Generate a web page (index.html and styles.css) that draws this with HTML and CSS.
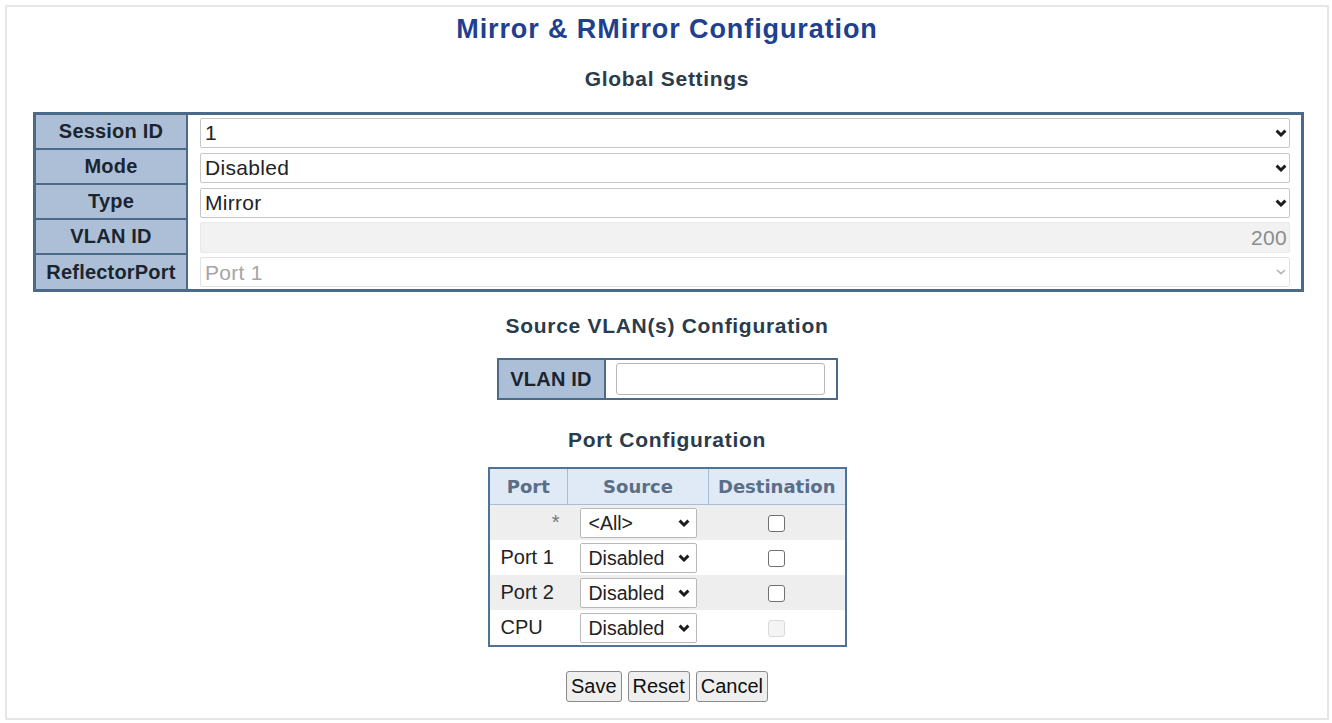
FILE: index.html
```html
<!DOCTYPE html>
<html lang="en">

<head>
    <meta charset="UTF-8">
    <meta name="viewport" content="width=device-width, initial-scale=1.0">
    <title>Mirror &amp; RMirror Configuration</title>
    <link rel="stylesheet" href="styles.css">
</head>

<body>
    <div class="frame">
        <h1 class="title">Mirror &amp; RMirror Configuration</h1>

        <h2 class="heading">Global Settings</h2>
        <div class="global">
            <div class="label">Session ID</div>
            <div class="value">
                <span class="sel">
                    <select class="field"><option>1</option></select>
                    <svg class="chev" viewBox="0 0 12 8"><polyline points="1.6,1.6 6,6 10.4,1.6"/></svg>
                </span>
            </div>
            <div class="label">Mode</div>
            <div class="value">
                <span class="sel">
                    <select class="field"><option>Disabled</option></select>
                    <svg class="chev" viewBox="0 0 12 8"><polyline points="1.6,1.6 6,6 10.4,1.6"/></svg>
                </span>
            </div>
            <div class="label">Type</div>
            <div class="value">
                <span class="sel">
                    <select class="field"><option>Mirror</option></select>
                    <svg class="chev" viewBox="0 0 12 8"><polyline points="1.6,1.6 6,6 10.4,1.6"/></svg>
                </span>
            </div>
            <div class="label">VLAN ID</div>
            <div class="value">
                <input class="field num" type="text" value="200" disabled>
            </div>
            <div class="label">ReflectorPort</div>
            <div class="value">
                <span class="sel">
                    <select class="field off" disabled><option>Port 1</option></select>
                    <svg class="chev light" viewBox="0 0 12 8"><polyline points="2,2 6,5.6 10,2"/></svg>
                </span>
            </div>
        </div>

        <h2 class="heading">Source VLAN(s) Configuration</h2>
        <div class="vlanbox">
            <div class="label">VLAN ID</div>
            <div class="vlanval"><input class="vlaninput" type="text"></div>
        </div>

        <h2 class="heading">Port Configuration</h2>
        <table class="ports">
            <colgroup>
                <col class="c1">
                <col class="c2">
                <col class="c3">
            </colgroup>
            <thead>
                <tr>
                    <th>Port</th>
                    <th>Source</th>
                    <th>Destination</th>
                </tr>
            </thead>
            <tbody>
                <tr class="odd">
                    <td class="star">*</td>
                    <td class="src">
                        <span class="psel">
                            <select class="pfield"><option>&lt;All&gt;</option></select>
                            <svg class="pchev" viewBox="0 0 12 8"><polyline points="1.6,1.6 6,6 10.4,1.6"/></svg>
                        </span>
                    </td>
                    <td class="dst"><input class="chk" type="checkbox"></td>
                </tr>
                <tr>
                    <td class="name">Port 1</td>
                    <td class="src">
                        <span class="psel">
                            <select class="pfield"><option>Disabled</option></select>
                            <svg class="pchev" viewBox="0 0 12 8"><polyline points="1.6,1.6 6,6 10.4,1.6"/></svg>
                        </span>
                    </td>
                    <td class="dst"><input class="chk" type="checkbox"></td>
                </tr>
                <tr class="odd">
                    <td class="name">Port 2</td>
                    <td class="src">
                        <span class="psel">
                            <select class="pfield"><option>Disabled</option></select>
                            <svg class="pchev" viewBox="0 0 12 8"><polyline points="1.6,1.6 6,6 10.4,1.6"/></svg>
                        </span>
                    </td>
                    <td class="dst"><input class="chk" type="checkbox"></td>
                </tr>
                <tr>
                    <td class="name">CPU</td>
                    <td class="src">
                        <span class="psel">
                            <select class="pfield"><option>Disabled</option></select>
                            <svg class="pchev" viewBox="0 0 12 8"><polyline points="1.6,1.6 6,6 10.4,1.6"/></svg>
                        </span>
                    </td>
                    <td class="dst"><input class="chk" type="checkbox" disabled></td>
                </tr>
            </tbody>
        </table>

        <div class="buttons">
            <button class="btn" type="button">Save</button>
            <button class="btn" type="button">Reset</button>
            <button class="btn" type="button">Cancel</button>
        </div>
    </div>
</body>

</html>
```

FILE: styles.css
```css
body {
    margin: 0;
    overflow: hidden;
    background: #fff;
    font-family: "Liberation Sans", Arial, sans-serif;
}

.frame {
    margin: 5px 3px 3px 5px;
    height: 715px;
    box-sizing: border-box;
    border: 2px solid #e6e6e6;
    padding-top: 6px;
}

.title {
    margin: 0;
    text-align: center;
    font-size: 27px;
    line-height: 32px;
    letter-spacing: 0.9px;
    color: #213f8e;
}

.heading {
    margin: 21px 0 0;
    text-align: center;
    font-size: 21px;
    line-height: 26px;
    letter-spacing: 0.7px;
    color: #2a3b4c;
}

/* global settings */
.global {
    display: grid;
    grid-template-columns: 152px 1fr;
    margin: 20px 23px 0 26px;
    border: 3px solid #4b6a8a;
}

.label {
    display: flex;
    align-items: center;
    justify-content: center;
    box-sizing: border-box;
    background: #adbfd6;
    font-weight: bold;
    font-size: 20px;
    letter-spacing: 0.2px;
    color: #1a2530;
}

.global .label {
    height: 35px;
    border-right: 2px solid #4b6a8a;
    border-bottom: 2px solid #4b6a8a;
}

.global .label:nth-last-child(2) {
    height: 34px;
    border-bottom: none;
}

.global .value {
    display: flex;
    align-items: center;
    padding: 0 11px 0 12px;
}

.sel {
    position: relative;
    display: flex;
    flex: 1;
}

.field {
    width: 100%;
    height: 30px;
    box-sizing: border-box;
    margin: 0;
    padding: 0 0 0 4px;
    -webkit-appearance: none;
    appearance: none;
    border: 1px solid #c6c6c6;
    border-radius: 2px;
    background: #fff;
    font-family: "Liberation Sans", Arial, sans-serif;
    font-size: 21px;
    letter-spacing: 0.3px;
    color: #222;
    opacity: 1;
}

.field.num {
    height: 31px;
    padding: 0 2px 0 0;
    text-align: right;
    background: #f2f2f2;
    border-color: #e9e9e9;
    color: #8c8c8c;
}

.field.off {
    border-color: #e2e2e2;
    color: #a5a5a5;
}

.chev {
    position: absolute;
    right: 3px;
    top: 50%;
    width: 12px;
    height: 8px;
    margin-top: -4px;
    fill: none;
    stroke: #1c1c1c;
    stroke-width: 2.9;
    pointer-events: none;
}

.chev.light {
    stroke: #b3b3b3;
    stroke-width: 1.6;
}

/* source vlan */
.vlanbox {
    display: flex;
    width: 341px;
    height: 42px;
    box-sizing: border-box;
    margin: 19px auto 0;
    border: 2px solid #4b6a8a;
}

.vlanbox .label {
    width: 107px;
    border-right: 2px solid #4b6a8a;
}

.vlanval {
    display: flex;
    align-items: center;
    padding-left: 10px;
}

.vlaninput {
    width: 209px;
    height: 32px;
    box-sizing: border-box;
    margin: 0;
    border: 1px solid #b8b8b8;
    border-radius: 3px;
    font-size: 20px;
}

.vlanbox + .heading {
    margin-top: 27px;
}

/* port table */
.ports {
    margin: 14px auto 0;
    width: 357px;
    table-layout: fixed;
    border-collapse: collapse;
    border: 2px solid #4f7397;
}

.ports .c1 {
    width: 79px;
}

.ports .c2 {
    width: 141px;
}

.ports .c3 {
    width: 137px;
}

.ports th {
    height: 35px;
    padding: 0;
    background: #dfeaf6;
    border-left: 1px solid #a9bdd2;
    border-right: 1px solid #a9bdd2;
    border-bottom: 1px solid #a9bdd2;
    font-family: "DejaVu Sans", Verdana, sans-serif;
    font-size: 18px;
    color: #5a6e88;
}

.ports td {
    height: 35px;
    padding: 0;
    font-size: 20px;
    color: #222;
}

.ports .odd td {
    background: #eeeeee;
}

.ports .name {
    padding-left: 11px;
}

.ports .star {
    text-align: right;
    padding-right: 8px;
    color: #777;
}

.ports .src,
.ports .dst {
    text-align: center;
}

.psel {
    position: relative;
    display: inline-block;
    vertical-align: middle;
}

.pfield {
    display: block;
    width: 117px;
    height: 30px;
    box-sizing: border-box;
    margin: 0;
    padding: 0 0 0 8px;
    -webkit-appearance: none;
    appearance: none;
    border: 1px solid #b9b9b9;
    border-radius: 2px;
    background: #fff;
    font-family: "Liberation Sans", Arial, sans-serif;
    font-size: 19.5px;
    color: #222;
}

.pchev {
    position: absolute;
    right: 7px;
    top: 50%;
    width: 12px;
    height: 8px;
    margin-top: -4px;
    fill: none;
    stroke: #1c1c1c;
    stroke-width: 2.9;
    pointer-events: none;
}

.chk {
    -webkit-appearance: none;
    appearance: none;
    width: 17px;
    height: 17px;
    margin: 0;
    vertical-align: middle;
    box-sizing: border-box;
    border: 1.5px solid #707070;
    border-radius: 3px;
    background: #fff;
}

.chk:disabled {
    border-color: #dadada;
    background: #f4f4f4;
}

/* buttons */
.buttons {
    display: flex;
    justify-content: center;
    gap: 6px;
    margin-top: 24px;
}

.btn {
    height: 31px;
    box-sizing: border-box;
    padding: 0 4px;
    border: 1px solid #8a8a8a;
    border-radius: 3px;
    background: #efefef;
    font-family: "Liberation Sans", Arial, sans-serif;
    font-size: 20px;
    color: #111;
}
```
